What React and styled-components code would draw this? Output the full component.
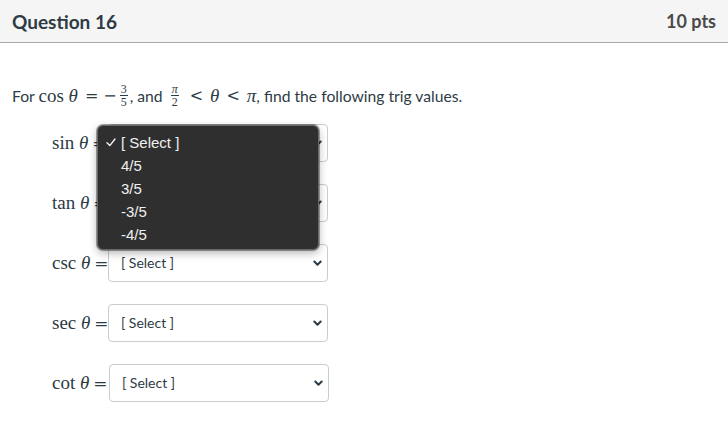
import React from "react";
import styled, { createGlobalStyle } from "styled-components";

const Global = createGlobalStyle`
  html, body { margin: 0; padding: 0; background: #fff; }
  body { font-family: Lato, "Open Sans", sans-serif; color: #2d3b45; }
`;

const Header = styled.header`
  display: flex;
  justify-content: space-between;
  align-items: center;
  height: 42px;
  padding: 0 12px;
  background: #f5f5f5;
  border-bottom: 1px solid #a9a9a9;
`;

const Title = styled.h2`
  margin: 0;
  font-size: 19px;
  font-weight: 700;
  color: #2d3b45;
`;

const Points = styled.span`
  font-size: 18px;
  font-weight: 700;
  color: #4a4a4a;
`;

const Content = styled.div`
  padding: 41px 12px 0;
`;

const Prompt = styled.p`
  margin: 0;
  font-size: 15.7px;
  line-height: 24px;
  display: flex;
  align-items: center;
  white-space: pre;
`;

const M = styled.span`
  font-family: "Liberation Serif", "DejaVu Serif", serif;
  font-size: 19px;
  font-style: ${(p) => (p.$italic ? "italic" : "normal")};
  margin: ${(p) => p.$m || "0"};
`;

const Op = styled.span`
  font-family: "DejaVu Serif", "Liberation Serif", serif;
  font-size: ${(p) => p.$size || 16}px;
  margin: ${(p) => p.$m || "0 5px"};
`;

const Frac = styled.span`
  display: inline-flex;
  flex-direction: column;
  align-items: center;
  font-family: "Liberation Serif", "DejaVu Serif", serif;
  font-size: 12px;
  line-height: 10px;
  margin: ${(p) => p.$m || "0 2px"};
  transform: translateY(-1px);
  & > span:first-child {
    border-bottom: 1px solid #2d3b45;
    padding: 0 1px 1px;
    font-style: ${(p) => (p.$italic ? "italic" : "normal")};
  }
  & > span:last-child { padding-top: 1px; }
`;

const Rows = styled.div`
  position: relative;
  display: flex;
  flex-direction: column;
  gap: 22px;
  margin-top: 16px;
  padding-left: 40px;
`;

const Row = styled.div`
  display: flex;
  align-items: center;
  height: 38px;
`;

const Label = styled.span`
  font-family: "Liberation Serif", "DejaVu Serif", serif;
  font-size: 19px;
  width: ${(p) => p.$w || 56}px;
  white-space: pre;
  color: #2d3b45;
  display: flex;
  align-items: center;
`;

const SelectBox = styled.div`
  box-sizing: border-box;
  width: 220px;
  height: 38px;
  border: 1px solid #c7cdd1;
  border-radius: 4px;
  background: #fff;
  display: flex;
  align-items: center;
  justify-content: space-between;
  padding: 0 5px 0 12px;
  font-size: 14px;
  color: #2d3b45;
  & > span { transform: translateY(-1px); }
`;

const Menu = styled.ul`
  position: absolute;
  left: 85px;
  top: 1px;
  box-sizing: border-box;
  width: 222px;
  height: 125px;
  margin: 0;
  padding: 5px 0;
  list-style: none;
  background: #2f2f2f;
  border: 1px solid #6a6a6a;
  border-radius: 6px;
  box-shadow: 0 0 0 1px rgba(0, 0, 0, 0.35), 0 3px 8px rgba(0, 0, 0, 0.3);
  font-family: "Liberation Sans", Arial, sans-serif;
`;

const Item = styled.li`
  display: flex;
  align-items: center;
  height: 23px;
  padding-left: 8px;
  font-size: 15px;
  color: #f0f0f0;
`;

const Check = styled.span`
  display: inline-flex;
  width: 15px;
`;

const Chevron = () => (
  <svg width="9" height="7" viewBox="0 0 9 7">
    <path d="M1.3 1.5 L4.5 4.7 L7.7 1.5" fill="none" stroke="#2d3b45" strokeWidth="2" strokeLinecap="round" strokeLinejoin="round" />
  </svg>
);

const CheckIcon = () => (
  <svg width="10" height="9" viewBox="0 0 10 9">
    <path d="M1 4.8 L3.8 7.6 L9 1" fill="none" stroke="#f0f0f0" strokeWidth="1.4" strokeLinecap="round" strokeLinejoin="round" />
  </svg>
);

const fns = [
  { fn: "sin", w: 56 },
  { fn: "tan", w: 56 },
  { fn: "csc", w: 56 },
  { fn: "sec", w: 56 },
  { fn: "cot", w: 57 },
];

const options = ["[ Select ]", "4/5", "3/5", "-3/5", "-4/5"];

export default function App() {
  return (
    <>
      <Global />
      <Header>
        <Title>Question 16</Title>
        <Points>10 pts</Points>
      </Header>
      <Content>
        <Prompt>
          {"For "}
          <M>cos </M>
          <M $italic>θ</M>
          <Op $m="0 5px 0 7px">=</Op>
          <Op $m="0">−</Op>
          <Frac $m="0 2px 0 3px">
            <span>3</span>
            <span>5</span>
          </Frac>
          {", and "}
          <Frac $italic $m="0 4px">
            <span>π</span>
            <span>2</span>
          </Frac>
          <Op $m="0 7px">&lt;</Op>
          <M $italic>θ</M>
          <Op $m="0 7px">&lt;</Op>
          <M $italic>π</M>
          {", find the following trig values."}
        </Prompt>
        <Rows>
          {fns.map((f) => (
            <Row key={f.fn}>
              <Label $w={f.w}>
                {f.fn + " "}
                <i>θ</i>
                <Op $size={17} $m="0 0 0 4px">=</Op>
              </Label>
              <SelectBox>
                <span>[ Select ]</span>
                <Chevron />
              </SelectBox>
            </Row>
          ))}
          <Menu>
            {options.map((o, i) => (
              <Item key={o}>
                <Check>{i === 0 ? <CheckIcon /> : null}</Check>
                {o}
              </Item>
            ))}
          </Menu>
        </Rows>
      </Content>
    </>
  );
}
